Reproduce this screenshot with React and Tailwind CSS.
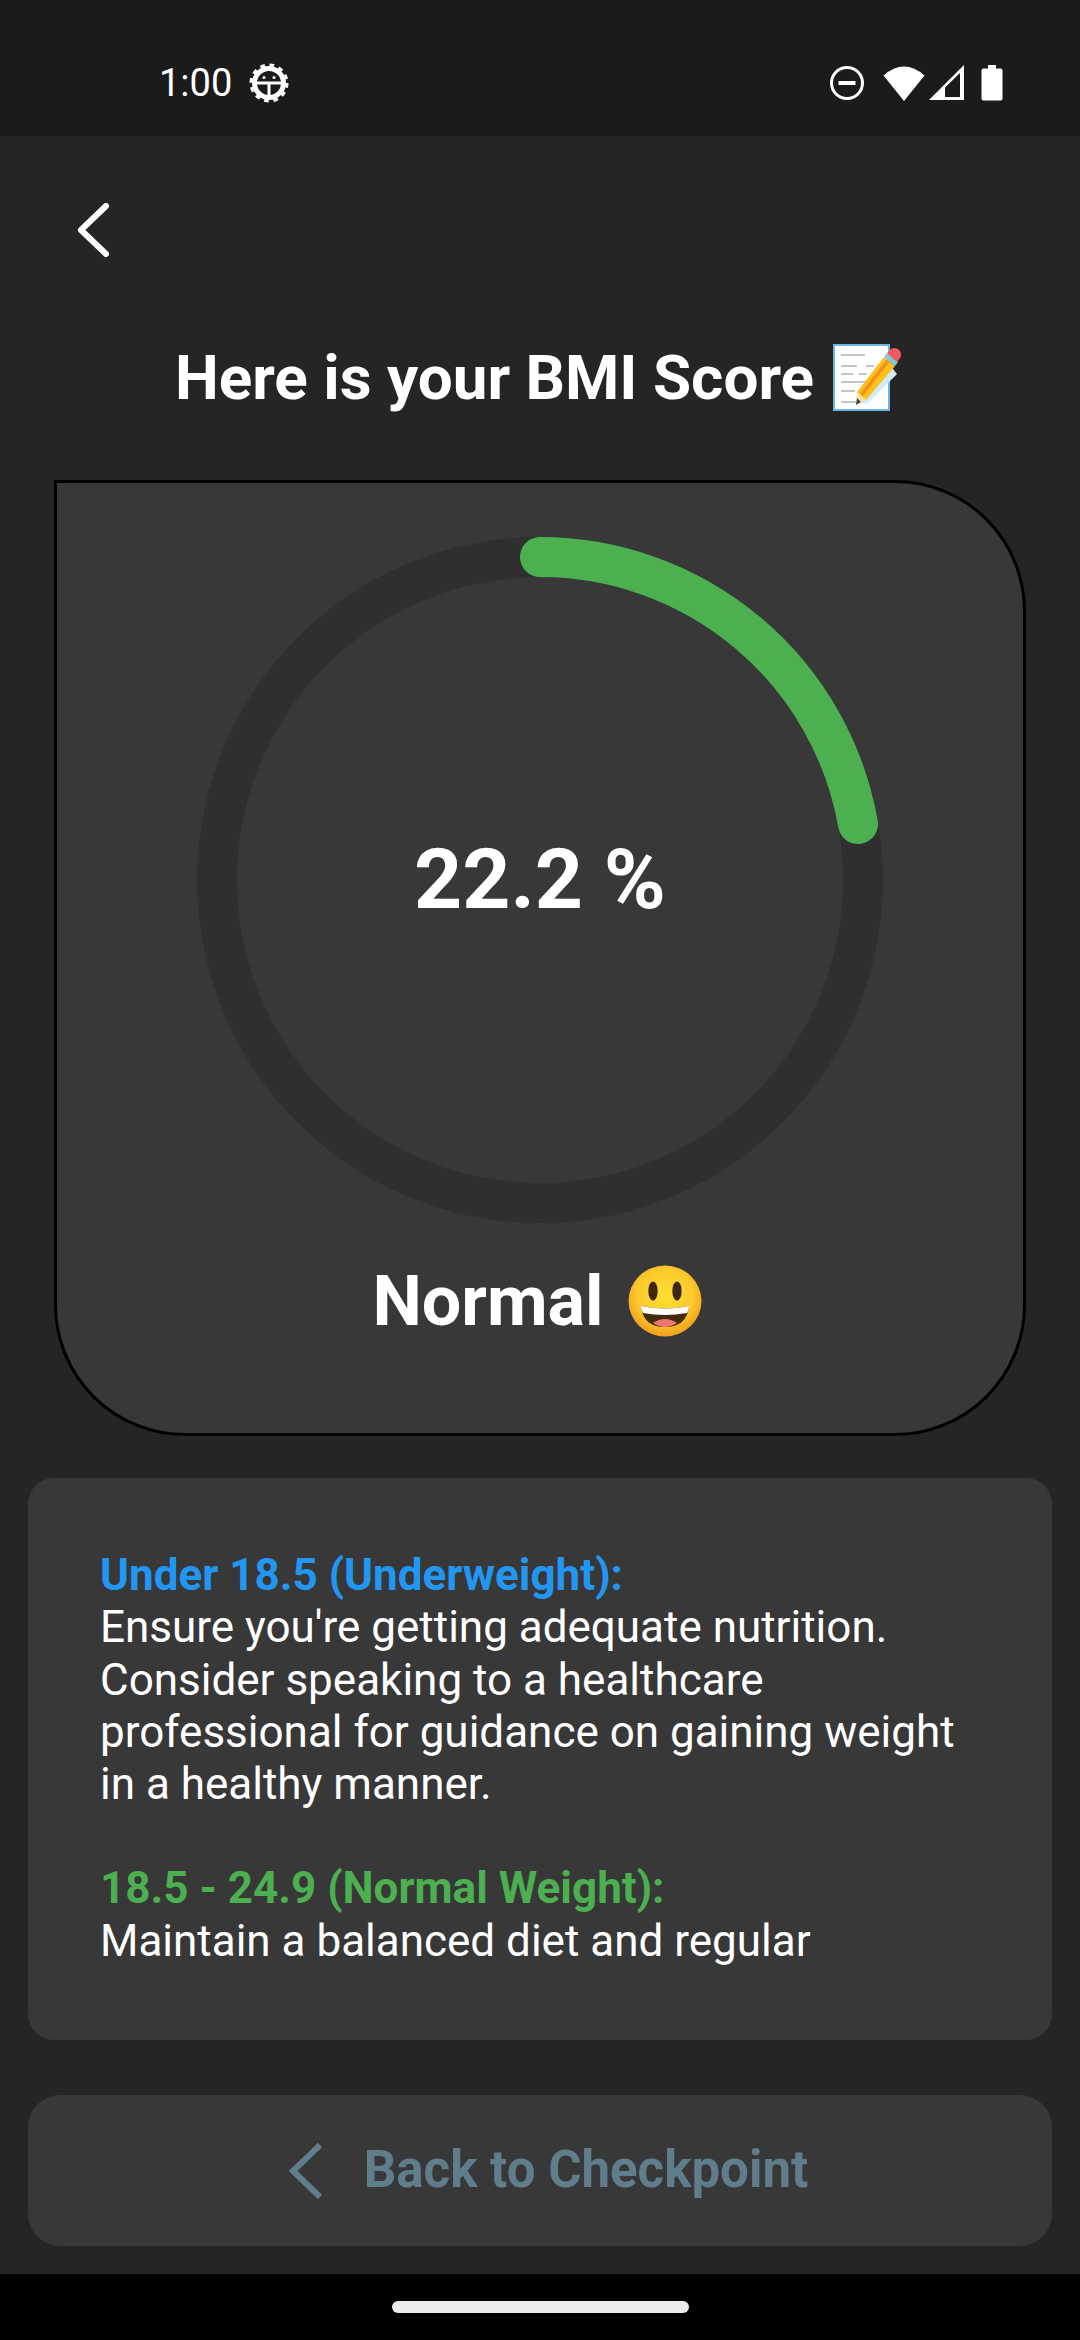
const FONT = { fontFamily: "Roboto, sans-serif" };

function StatusBar() {
  return (
    <div className="h-[136px] bg-[#1b1b1b] flex items-center justify-between pl-[159px] pr-[77px] pt-[30px] shrink-0">
      <div className="flex items-center gap-[17px]">
        <span className="text-[38px] leading-none text-white">1:00</span>
        <svg width="40" height="40" viewBox="0 0 40 40" fill="none" stroke="white">
          <circle cx="20" cy="20" r="14.500" strokeWidth="5" />
          <circle cx="20" cy="20" r="17.500" strokeWidth="4" strokeDasharray="4.580 4.580" />
          <path d="M7 20h26M20 20v14" strokeWidth="3" />
          <circle cx="15" cy="14.500" r="1.500" fill="white" stroke="none" />
          <circle cx="25" cy="14.500" r="1.500" fill="white" stroke="none" />
        </svg>
      </div>
      <div className="flex items-center">
        <svg width="36" height="36" viewBox="0 0 36 36" fill="none" stroke="white" strokeWidth="3">
          <circle cx="18" cy="18" r="15.500" />
          <path d="M9.500 18h17" strokeWidth="4" />
        </svg>
        <svg className="ml-[18px]" width="42" height="36" viewBox="0 0 42 36" fill="white">
          <path d="M21 36L0.500 10.500Q21 -7.500 41.500 10.500z" />
        </svg>
        <svg className="ml-[4px]" width="36" height="36" viewBox="0 0 36 36" fill="white">
          <path fillRule="evenodd" d="M35 0v35H0zM31 8L16 22.500v9.500h15z" />
        </svg>
        <svg className="ml-[16px]" width="22" height="36" viewBox="0 0 22 36" fill="white">
          <path d="M7 0h8v3.500h4.500a2 2 0 0 1 2 2V33.500a2 2 0 0 1-2 2h-17a2 2 0 0 1-2-2V5.500a2 2 0 0 1 2-2H7z" />
        </svg>
      </div>
    </div>
  );
}

function MemoEmoji() {
  return (
    <svg className="inline-block ml-[19px]" width="72" height="68" viewBox="0 0 72 68">
      <rect x="1" y="1" width="55" height="65" fill="#fff" stroke="#6cb6e6" strokeWidth="2" />
      <g stroke="#aab4b9" strokeWidth="1.500" fill="none">
        <path d="M8 11h24M8 22h16M33 22h8M8 30h12M26 30h8M8 38h30M8 47h14M8 58h18" />
      </g>
      <path d="M22 58l34-38 8 10-30 30z" fill="#d3ebf8" />
      <path d="M24 48L51 13l11 9-29 34z" fill="#fdc11a" />
      <path d="M30 52L57 17l-3-2-27 35z" fill="#f19220" />
      <path d="M24 48l9 8-10 5z" fill="#fde0a0" />
      <path d="M24 54l4 4-5 3z" fill="#444" />
      <path d="M51 13l3-4 11 9-3 4z" fill="#84cbd9" />
      <path d="M54 9l4-4c3-2 6-1 8 1s3 5 1 8l-3 4z" fill="#ef5b5f" />
    </svg>
  );
}

function SmileEmoji() {
  return (
    <svg className="inline-block ml-[24px]" width="74" height="72" viewBox="0 0 74 72">
      <defs>
        <radialGradient id="face" cx="50%" cy="42%" r="55%">
          <stop offset="0%" stopColor="#fde030" />
          <stop offset="70%" stopColor="#fbc92c" />
          <stop offset="100%" stopColor="#f2a51f" />
        </radialGradient>
      </defs>
      <ellipse cx="37" cy="36" rx="36.500" ry="35.500" fill="url(#face)" />
      <ellipse cx="25" cy="26" rx="4.700" ry="9.500" fill="#3f2610" />
      <ellipse cx="49" cy="26" rx="4.700" ry="9.500" fill="#3f2610" />
      <path d="M13 41Q37 46 61 41Q59 62 37 62Q15 62 13 41z" fill="#422b0d" />
      <path d="M13 41Q37 46 61 41Q61 45 59 48Q37 52 15 48Q13 45 13 41z" fill="#fff" />
      <path d="M25 58Q37 50 49 58Q43 62 37 62Q31 62 25 58z" fill="#ed7770" />
    </svg>
  );
}

function Gauge() {
  return (
    <svg width="686" height="686" viewBox="0 0 686 686" fill="none">
      <circle cx="343" cy="343" r="323" stroke="#2f2f2f" strokeWidth="40" />
      <path d="M343 20A323 323 0 0 1 661 287" stroke="#4caf50" strokeWidth="40" strokeLinecap="round" />
    </svg>
  );
}

export default function App() {
  return (
    <div style={FONT} className="w-[1080px] h-[2340px] bg-[#252525] flex flex-col overflow-hidden text-white">
      <StatusBar />

      <div className="h-[344px] shrink-0 flex flex-col">
        <div className="pl-[76px] pt-[67px]">
          <svg width="34" height="54" viewBox="0 0 34 54" fill="none" stroke="white" strokeWidth="6" strokeLinecap="round" strokeLinejoin="round">
            <path d="M30 3L5 27l25 24" />
          </svg>
        </div>
        <h1 className="mt-[86px] text-center text-[62px] leading-[70px] font-bold flex justify-center items-center">
          Here is your BMI Score
          <MemoEmoji />
        </h1>
      </div>

      <div className="ml-[54px] w-[972px] h-[956px] shrink-0 bg-[#383838] border-[3px] border-black rounded-[131px] rounded-tl-none flex flex-col items-center pt-[54px]">
        <div className="relative w-[686px] h-[686px] shrink-0">
          <Gauge />
          <div className="absolute inset-0 flex items-center justify-center text-[84px] font-bold">22.2 %</div>
        </div>
        <div className="mt-[38px] pr-[6px] flex items-center text-[70px] leading-[80px] font-bold">
          Normal
          <SmileEmoji />
        </div>
      </div>

      <div className="mx-[28px] mt-[42px] h-[562px] shrink-0 bg-[#383838] rounded-[26px] pl-[72px] pr-[64px] pt-[71px] text-[44px] leading-[52.300px]">
        <p className="font-bold text-[#2196f3]">Under 18.5 (Underweight):</p>
        <p>Ensure you're getting adequate nutrition. Consider speaking to a healthcare professional for guidance on gaining weight in a healthy manner.</p>
        <p className="mt-[52px] font-bold text-[#4caf50]">18.5 - 24.9 (Normal Weight):</p>
        <p>Maintain a balanced diet and regular</p>
      </div>

      <div className="mx-[28px] mt-[55px] h-[151px] shrink-0 bg-[#383838] rounded-[32px] pl-[16px] flex items-center justify-center text-[#607d8b]">
        <svg width="36" height="56" viewBox="0 0 36 56" fill="none" stroke="#607d8b" strokeWidth="6">
          <path d="M32 2L5 28l27 26" />
        </svg>
        <span className="ml-[40px] text-[51px] font-bold">Back to Checkpoint</span>
      </div>

      <div className="mt-[28px] flex-1 bg-black flex justify-center pt-[27px]">
        <div className="w-[297px] h-[12px] rounded-full bg-[#ebebeb]" />
      </div>
    </div>
  );
}
